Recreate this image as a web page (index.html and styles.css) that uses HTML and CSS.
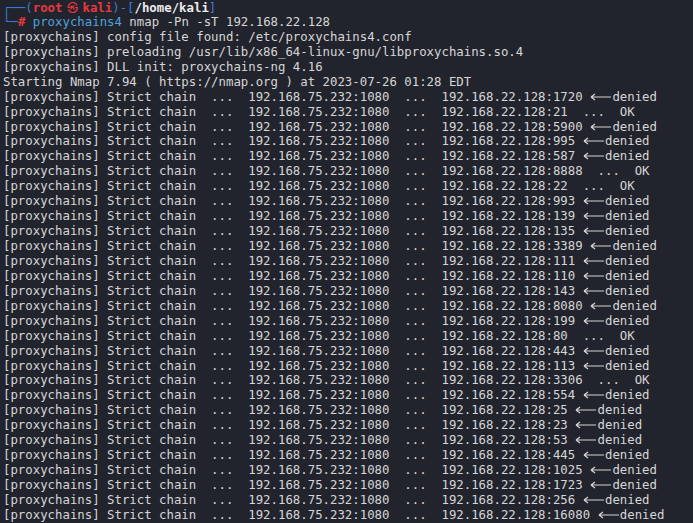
FILE: index.html
```html
<!DOCTYPE html>
<html>
<head>
<meta charset="utf-8">
<link rel="stylesheet" href="styles.css">
</head>
<body>
<div class="term" id="term">
<div class="ln"><span class="bx">┌──(</span><span class="usr">root<span class="at">㉿</span>kali</span><span class="bx">)-[</span><span class="dir">/home/kali</span><span class="bx">]</span></div>
<div class="ln"><span class="bx">└─</span><span class="hash">#</span> <span class="cmd">proxychains4</span> nmap -Pn -sT 192.168.22.128</div>
<div class="ln">[proxychains] config file found: /etc/proxychains4.conf</div>
<div class="ln">[proxychains] preloading /usr/lib/x86_64-linux-gnu/libproxychains.so.4</div>
<div class="ln">[proxychains] DLL init: proxychains-ng 4.16</div>
<div class="ln">Starting Nmap 7.94 ( https://nmap.org ) at 2023-07-26 01:28 EDT</div>
</div>
<script>
(function(){
var ports=[["1720",0],["21",1],["5900",0],["995",0],["587",0],["8888",1],["22",1],["993",0],["139",0],["135",0],["3389",0],["111",0],["110",0],["143",0],["8080",0],["199",0],["80",1],["443",0],["113",0],["3306",1],["554",0],["25",0],["23",0],["53",0],["445",0],["1025",0],["1723",0],["256",0],["16080",0]];
var t=document.getElementById('term');
var arrow='<span class="arr"><svg viewBox="0 0 22 10" width="22" height="10"><path d="M1 5H21M1 5L5 2M1 5L5 8" fill="none" stroke="#d4d4d4" stroke-width="1.2"/></svg></span>';
ports.forEach(function(p){
  var d=document.createElement('div');
  d.className='ln';
  var s='[proxychains] Strict chain  ...  192.168.75.232:1080  ...  192.168.22.128:'+p[0]+' ';
  d.innerHTML=s+(p[1]?' ...  OK':arrow+'denied');
  t.appendChild(d);
});
})();
</script>
</body>
</html>
```
FILE: styles.css
```css
html, body {
  margin: 0;
  padding: 0;
  background: #22242d;
  width: 693px;
  height: 523px;
  overflow: hidden;
}
.term {
  padding: 0 0 0 3px;
  font-family: "DejaVu Sans Mono", "Liberation Mono", monospace;
  font-size: 12.35px;
  line-height: 14.94px;
  color: #d6d6d6;
}
.ln {
  white-space: pre;
  height: 14.94px;
}
.bx {
  color: #3a7bd5;
}
.usr {
  color: #e8383d;
  font-weight: bold;
}
.at {
  display: inline-block;
  width: 20px;
  text-align: center;
  font-family: "Noto Sans CJK KR", "Noto Sans CJK SC", sans-serif;
  font-weight: normal;
  font-size: 11px;
}
.dir {
  color: #ececec;
  font-weight: bold;
}
.hash {
  color: #e8383d;
  font-weight: bold;
}
.cmd {
  color: #4fa3dc;
}
.arr {
  display: inline-block;
  width: 3ch;
  vertical-align: -1px;
}
.arr svg {
  display: block;
}
```
